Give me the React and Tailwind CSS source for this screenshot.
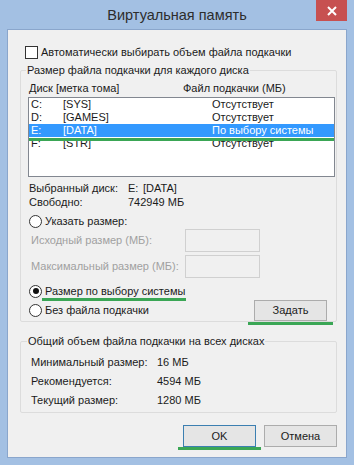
const DRIVES = [
  { id: 'C', disk: 'C:', label: '[SYS]', size: 'Отсутствует' },
  { id: 'D', disk: 'D:', label: '[GAMES]', size: 'Отсутствует' },
  { id: 'E', disk: 'E:', label: '[DATA]', size: 'По выбору системы', selected: true },
  { id: 'F', disk: 'F:', label: '[STR]', size: 'Отсутствует' },
];

const TOTALS = [
  { label: 'Минимальный размер:', value: '16 МБ' },
  { label: 'Рекомендуется:', value: '4594 МБ' },
  { label: 'Текущий размер:', value: '1280 МБ' },
];

function Radio({ checked }) {
  return (
    <span className="flex h-[13px] w-[13px] shrink-0 items-center justify-center rounded-full border border-[#333] bg-white">
      {checked && <span className="h-[6px] w-[6px] rounded-full bg-[#111]" />}
    </span>
  );
}

function Button({ children, primary, className = '' }) {
  return (
    <div
      className={`flex h-[21px] w-[73px] items-center justify-center border bg-[#e5e5e5] ${
        primary ? 'border-[#3c7fb1]' : 'border-[#acacac]'
      } ${className}`}
    >
      {children}
    </div>
  );
}

export default function App() {
  return (
    <div className="flex h-[465px] w-[354px] flex-col whitespace-nowrap bg-[#a3c0e3] px-[7px] font-['Liberation_Sans',Arial,sans-serif]">
      {/* title bar */}
      <div className="grid h-[29px] grid-cols-[1fr_auto_1fr]">
        <div />
        <div className="pt-[5px] text-[14.5px] leading-[20px] text-[#2d2d2d]">Виртуальная память</div>
        <div className="flex justify-end">
          <div className="flex h-[21px] w-[31px] items-center justify-center bg-[#c75050]">
            <svg width="10" height="10" viewBox="0 0 10 10">
              <path d="M1 1L9 9M9 1L1 9" stroke="white" strokeWidth="2" />
            </svg>
          </div>
        </div>
      </div>

      <div className="h-[429px] border border-[#8aa6cc] bg-[#f0f0f0] text-[11px] leading-[15px] text-[#1b1b1b]">
        <div className="ml-[17px] mt-[15px] flex h-[14px] items-center gap-[3px]">
          <span className="h-[13px] w-[13px] shrink-0 border border-[#333] bg-white" />
          <span>Автоматически выбирать объем файла подкачки</span>
        </div>

        {/* per-disk group */}
        <fieldset className="ml-[12px] mt-[4px] w-[317px] rounded-[2px] border border-[#dcdcdc]">
          <legend className="ml-[5px] px-[1px] leading-[15px]">Размер файла подкачки для каждого диска</legend>

          <div className="mt-[2px] flex h-[16px] items-center pl-[8px]">
            <span className="w-[154px]">Диск [метка тома]</span>
            <span>Файл подкачки (МБ)</span>
          </div>

          <div className="relative ml-[7px] mt-[1px] h-[80px] w-[307px] border border-[#828790] bg-white">
            {DRIVES.map((d) => (
              <div
                key={d.id}
                className={`grid h-[13px] grid-cols-[32px_149px_1fr] pl-[2px] leading-[13px] ${
                  d.selected ? 'bg-[#3399ff] text-white' : ''
                }`}
              >
                <span>{d.disk}</span>
                <span>{d.label}</span>
                <span>{d.size}</span>
              </div>
            ))}
            <div className="absolute left-0 right-0 top-[40px] h-[3px] bg-[#3aa655]" />
          </div>

          <div className="mt-[4px] flex h-[14px] items-center pl-[8px]">
            <span className="w-[99px]">Выбранный диск:</span>
            <span className="w-[15px]">E:</span>
            <span>[DATA]</span>
          </div>
          <div className="flex h-[14px] items-center pl-[8px]">
            <span className="w-[99px]">Свободно:</span>
            <span>742949 МБ</span>
          </div>

          <div className="mt-[4px] flex h-[16px] items-center gap-[3px] pl-[8px]">
            <Radio />
            <span>Указать размер:</span>
          </div>
          <div className="flex h-[23px] items-center pl-[10px] text-[#a0a0a0]">
            <span className="w-[154px]">Исходный размер (МБ):</span>
            <span className="h-[23px] w-[75px] border border-[#d0d0d0] bg-[#f0f0f0]" />
          </div>
          <div className="mt-[3px] flex h-[23px] items-center pl-[10px] text-[#a0a0a0]">
            <span className="w-[154px]">Максимальный размер (МБ):</span>
            <span className="h-[23px] w-[75px] border border-[#d0d0d0] bg-[#f0f0f0]" />
          </div>

          <div className="relative mt-[5px] flex h-[16px] items-center gap-[3px] pl-[8px]">
            <Radio checked />
            <span>Размер по выбору системы</span>
            <div className="absolute left-[21px] top-[15px] h-[3px] w-[144px] bg-[#3aa655]" />
          </div>

          <div className="relative mt-[1px] flex h-[21px] items-center justify-between pl-[8px] pr-[9px]">
            <div className="flex items-center gap-[3px]">
              <Radio />
              <span>Без файла подкачки</span>
            </div>
            <Button>Задать</Button>
            <div className="absolute left-[227px] top-[22px] h-[3px] w-[85px] bg-[#3aa655]" />
          </div>
        </fieldset>

        {/* totals group */}
        <fieldset className="ml-[12px] mt-[12px] w-[317px] rounded-[2px] border border-[#dcdcdc] pb-[2px]">
          <legend className="ml-[6px] px-[1px] leading-[15px]">Общий объем файла подкачки на всех дисках</legend>
          <div className="mt-[4px]">
            {TOTALS.map((t) => (
              <div key={t.label} className="flex h-[19px] items-center pl-[10px]">
                <span className="w-[126px]">{t.label}</span>
                <span>{t.value}</span>
              </div>
            ))}
          </div>
        </fieldset>

        <div className="mt-[12px] flex justify-end gap-[8px] pr-[9px]">
          <div className="relative">
            <Button primary className="h-[22px]">OK</Button>
            <div className="absolute left-[-5px] top-[22px] h-[3px] w-[83px] bg-[#3aa655]" />
          </div>
          <Button className="h-[22px]">Отмена</Button>
        </div>
      </div>
    </div>
  );
}
